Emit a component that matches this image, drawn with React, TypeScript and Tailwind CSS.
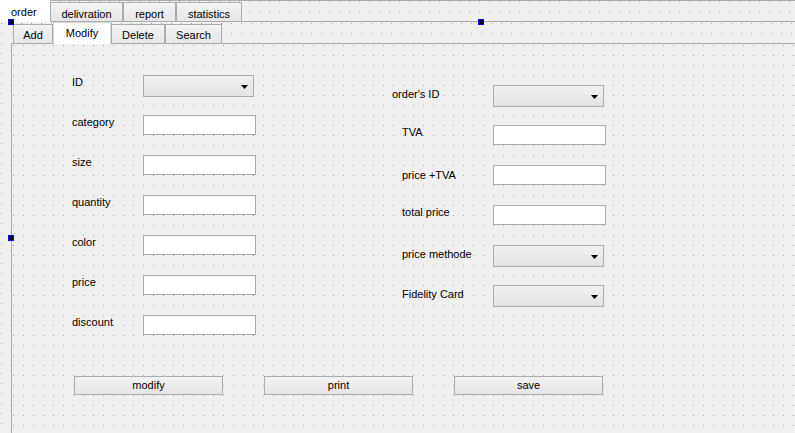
import React from "react";

const dots =
  "bg-[image:linear-gradient(90deg,#f0f0f0_9px,transparent_9px),linear-gradient(#f0f0f0_9px,#a0a0a0_9px)] bg-size-[10px_10px]";

const Arrow = () => (
  <svg width="7" height="4" viewBox="0 0 7 4" className="mt-px">
    <polygon points="0,0 7,0 3.5,4" fill="#000" />
  </svg>
);

const Combo = () => (
  <div className="w-[111px] h-[22px] border border-[#acacac] bg-linear-to-b from-[#f2f2f2] to-[#e3e3e3] flex items-center justify-end pr-[5px]">
    <Arrow />
  </div>
);

const Edit = () => <div className="w-[113px] h-[20px] border border-[#acacac] bg-white" />;

type Row = { label: string; kind: "combo" | "edit"; indent?: boolean; offset: string };

const leftRows: Row[] = [
  { label: "ID", kind: "combo", offset: "mt-px" },
  { label: "category", kind: "edit", offset: "mt-px" },
  { label: "size", kind: "edit", offset: "mt-px" },
  { label: "quantity", kind: "edit", offset: "mt-px" },
  { label: "color", kind: "edit", offset: "mt-px" },
  { label: "price", kind: "edit", offset: "mt-px" },
  { label: "discount", kind: "edit", offset: "mt-px" },
];

const rightRows: Row[] = [
  { label: "order's ID", kind: "combo", offset: "mt-[3px]" },
  { label: "TVA", kind: "edit", indent: true, offset: "mt-px" },
  { label: "price +TVA", kind: "edit", indent: true, offset: "mt-[4px]" },
  { label: "total price", kind: "edit", indent: true, offset: "mt-px" },
  { label: "price methode", kind: "combo", indent: true, offset: "mt-[3px]" },
  { label: "Fidelity Card", kind: "combo", indent: true, offset: "mt-[3px]" },
];

const FieldRow: React.FC<{ row: Row; labelWidth: string }> = ({ row, labelWidth }) => (
  <div className="h-[40px] flex items-start">
    <div className={`${labelWidth} ${row.indent ? "pl-[10px]" : ""} ${row.offset}`}>{row.label}</div>
    {row.kind === "combo" ? <Combo /> : <Edit />}
  </div>
);

const Handle: React.FC<{ pos: string }> = ({ pos }) => (
  <div className={`absolute ${pos} w-[6px] h-[6px] border border-[#0000ff] bg-black z-20`} />
);

export default function App() {
  const outerTabs = [
    { name: "delivration", w: "w-[73px]" },
    { name: "report", w: "w-[53px]" },
    { name: "statistics", w: "w-[66px]" },
  ];
  const innerTabs = [
    { name: "Delete", w: "w-[54px]" },
    { name: "Search", w: "w-[57px]" },
  ];

  return (
    <div
      className={`relative w-[795px] h-[433px] overflow-hidden flex flex-col bg-[#f0f0f0] ${dots} bg-position-[0px_2px] font-['Liberation_Sans',Arial,sans-serif] text-[11px] leading-[13px] text-black`}
    >
      {/* outer tab bar */}
      <div className="h-[21px] shrink-0 border-t border-[#acacac] flex items-start">
        <div className="relative z-10 -mt-px w-[50px] h-[22px] bg-white pt-[6px] pl-[11px]">order</div>
        {outerTabs.map(t => (
          <div
            key={t.name}
            className={`${t.w} mt-px h-[19px] border-t border-l border-r border-[#acacac] bg-linear-to-b from-[#f4f4f4] to-[#e6e6e6] pt-[5px] text-center`}
          >
            {t.name}
          </div>
        ))}
      </div>

      {/* outer pane */}
      <div className={`flex-1 flex flex-col border-t border-[#acacac] bg-[#f0f0f0] ${dots} bg-position-[2px_2px]`}>
        <div className="ml-[11px] flex-1 flex flex-col">
          {/* inner tab bar */}
          <div className="h-[21px] shrink-0 flex items-start pl-[2px]">
            <div className="w-[40px] mt-[2px] h-[19px] border-t border-l border-r border-[#acacac] bg-linear-to-b from-[#f4f4f4] to-[#e6e6e6] pt-[4px] text-center">
              Add
            </div>
            <div className="relative z-10 w-[58px] h-[22px] border-t border-l border-r border-[#d8d8d8] bg-white pt-[4px] text-center">
              Modify
            </div>
            {innerTabs.map(t => (
              <div
                key={t.name}
                className={`${t.w} mt-[2px] h-[19px] border-t border-l border-r border-[#acacac] bg-linear-to-b from-[#f4f4f4] to-[#e6e6e6] pt-[4px] text-center`}
              >
                {t.name}
              </div>
            ))}
          </div>

          {/* inner pane */}
          <div className={`flex-1 border-t border-l border-[#acacac] bg-[#f0f0f0] ${dots} bg-position-[2px_2px] pl-[60px] pt-[31px]`}>
            <div className="flex">
              <div className="w-[320px] flex flex-col">
                {leftRows.map(r => (
                  <FieldRow key={r.label} row={r} labelWidth="w-[71px]" />
                ))}
              </div>
              <div className="mt-[10px] flex flex-col">
                {rightRows.map(r => (
                  <FieldRow key={r.label} row={r} labelWidth="w-[101px]" />
                ))}
              </div>
            </div>
            <div className="mt-[21px] ml-[2px] flex gap-[41px]">
              {["modify", "print", "save"].map(b => (
                <div
                  key={b}
                  className="w-[149px] h-[19px] border border-[#acacac] bg-linear-to-b from-[#f2f2f2] to-[#e5e5e5] flex items-center justify-center"
                >
                  {b}
                </div>
              ))}
            </div>
          </div>
        </div>
      </div>

      {/* selection handles */}
      <Handle pos="left-[8px] top-[19px]" />
      <Handle pos="left-[478px] top-[19px]" />
      <Handle pos="left-[8px] top-[235px]" />
    </div>
  );
}
